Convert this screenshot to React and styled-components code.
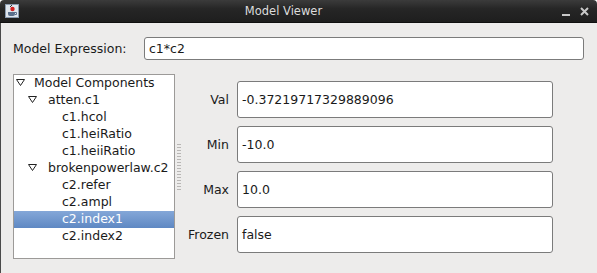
import React from 'react';
import styled, { createGlobalStyle } from 'styled-components';

const GlobalStyle = createGlobalStyle`
  html, body {
    margin: 0;
    padding: 0;
    background: #ffffff;
  }
  body {
    font-family: 'DejaVu Sans', 'Liberation Sans', sans-serif;
    font-size: 12.5px;
    color: #1a1a1a;
  }
`;

const Window = styled.div`
  width: 597px;
  height: 273px;
  display: flex;
  flex-direction: column;
  overflow: hidden;
`;

const TitleBar = styled.div`
  height: 22px;
  flex-shrink: 0;
  display: flex;
  align-items: center;
  background: linear-gradient(#3b3b3b, #262626 40%, #1e1e1e);
  border-bottom: 1px solid #101010;
  border-radius: 4px 4px 0 0;
  padding: 0 8px 0 5px;
`;

const AppIcon = styled.svg`
  width: 14px;
  height: 14px;
  flex-shrink: 0;
`;

const Title = styled.div`
  flex: 1;
  text-align: center;
  color: #dcdcdc;
  font-size: 11.5px;
  padding-right: 14px;
`;

const WinButtons = styled.div`
  display: flex;
  align-items: center;
  gap: 9px;
  padding-top: 2px;
`;

const Body = styled.div`
  flex: 1;
  display: flex;
  flex-direction: column;
  background: #edeceb;
  border-left: 1px solid #4a4a4a;
  padding: 14px 14px 14px 12px;
  gap: 14px;
`;

const ExprRow = styled.div`
  display: flex;
  align-items: center;
`;

const ExprLabel = styled.div`
  width: 131px;
  flex-shrink: 0;
`;

const Field = styled.div`
  box-sizing: border-box;
  background: #ffffff;
  border: 1px solid #7b7b7b;
  border-radius: 3px;
  height: ${p => p.h}px;
  display: flex;
  align-items: center;
  padding-left: 4px;
  white-space: nowrap;
`;

const ExprField = styled(Field)`
  flex: 1;
  margin-right: -1px;
`;

const Split = styled.div`
  flex: 1;
  display: flex;
  min-height: 0;
`;

const Tree = styled.div`
  box-sizing: border-box;
  width: 162px;
  flex-shrink: 0;
  background: #ffffff;
  border: 1px solid #9c9a98;
`;

const Row = styled.div`
  box-sizing: border-box;
  height: 17px;
  padding-bottom: 2px;
  display: flex;
  align-items: center;
  padding-left: ${p => p.indent}px;
  color: ${p => (p.selected ? '#ffffff' : '#1a1a1a')};
  background: ${p => (p.selected ? 'linear-gradient(#84a7d8, #5e88c3)' : 'transparent')};
  position: relative;
  white-space: nowrap;
`;

const Toggle = styled.svg`
  position: absolute;
  left: ${p => p.x}px;
  top: 4px;
  width: 9px;
  height: 7px;
`;

const Divider = styled.div`
  width: 8px;
  flex-shrink: 0;
  display: flex;
  align-items: center;
  justify-content: center;
`;

const Grip = styled.div`
  width: 4px;
  height: 48px;
  background-image: radial-gradient(circle, #b8b6b4 0.8px, transparent 1px);
  background-size: 2px 3px;
`;

const Props = styled.div`
  flex: 1;
  display: grid;
  grid-template-columns: 46px 316px;
  column-gap: 8px;
  row-gap: 8px;
  align-content: center;
  align-items: center;
`;

const PropLabel = styled.div`
  text-align: right;
  white-space: nowrap;
`;

const rows = [
  { text: 'Model Components', indent: 20, open: true, toggle: 2 },
  { text: 'atten.c1', indent: 34, open: true, toggle: 14 },
  { text: 'c1.hcol', indent: 48 },
  { text: 'c1.heiRatio', indent: 48 },
  { text: 'c1.heiiRatio', indent: 48 },
  { text: 'brokenpowerlaw.c2', indent: 34, open: true, toggle: 14 },
  { text: 'c2.refer', indent: 48 },
  { text: 'c2.ampl', indent: 48 },
  { text: 'c2.index1', indent: 48, selected: true },
  { text: 'c2.index2', indent: 48 }
];

const params = [
  { label: 'Val', value: '-0.37219717329889096' },
  { label: 'Min', value: '-10.0' },
  { label: 'Max', value: '10.0' },
  { label: 'Frozen', value: 'false' }
];

const App = () => (
  <Window>
    <GlobalStyle />
    <TitleBar>
      <AppIcon viewBox="0 0 14 14">
        <rect x="0.5" y="0.5" width="13" height="13" fill="#dfe6ee" stroke="#8a9bb0" />
        <path d="M3 8 h7 v2 a2 2 0 0 1 -2 2 h-3 a2 2 0 0 1 -2 -2z" fill="#5a6f8c" />
        <path d="M10 8.5 h1.5 v2 h-1.5" fill="none" stroke="#5a6f8c" />
        <circle cx="7.5" cy="5" r="2.2" fill="#d42020" />
        <path d="M5 3 l2 -2" stroke="#333" strokeWidth="1" />
      </AppIcon>
      <Title>Model Viewer</Title>
      <WinButtons>
        <svg width="9" height="10" viewBox="0 0 9 10">
          <rect x="0" y="7" width="8" height="2" fill="#c8c8c8" />
        </svg>
        <svg width="9" height="10" viewBox="0 0 9 10">
          <path d="M1 1 L8 8 M8 1 L1 8" stroke="#c8c8c8" strokeWidth="2" />
        </svg>
      </WinButtons>
    </TitleBar>
    <Body>
      <ExprRow>
        <ExprLabel>Model Expression:</ExprLabel>
        <ExprField h={23}>c1*c2</ExprField>
      </ExprRow>
      <Split>
        <Tree>
          {rows.map(r => (
            <Row key={r.text} indent={r.indent} selected={r.selected}>
              {r.open && (
                <Toggle x={r.toggle} viewBox="0 0 9 7">
                  <path d="M0.5 0.5 H8.5 L4.5 6.5 Z" fill="none" stroke="#222" strokeWidth="1" />
                </Toggle>
              )}
              {r.text}
            </Row>
          ))}
        </Tree>
        <Divider>
          <Grip />
        </Divider>
        <Props>
          {params.map(p => (
            <React.Fragment key={p.label}>
              <PropLabel>{p.label}</PropLabel>
              <Field h={37}>{p.value}</Field>
            </React.Fragment>
          ))}
        </Props>
      </Split>
    </Body>
  </Window>
);

export default App;
